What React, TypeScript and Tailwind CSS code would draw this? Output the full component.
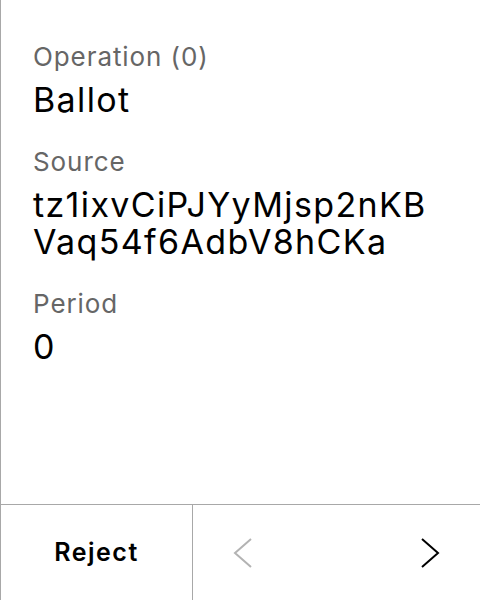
const fields = [
  { label: 'Operation (0)', value: 'Ballot' },
  { label: 'Source', value: 'tz1ixvCiPJYyMjsp2nKBVaq54f6AdbV8hCKa' },
  { label: 'Period', value: '0' },
];

const Chevron = ({ dir, color }: { dir: 'left' | 'right'; color: string }) => (
  <svg width="20" height="32" viewBox="0 0 20 32" fill="none" className={color}>
    <polyline
      points={dir === 'left' ? '18,2 2,16 18,30' : '2,2 18,16 2,30'}
      stroke="currentColor"
      strokeWidth="2"
    />
  </svg>
);

const App = () => {
  return (
    <div className="flex h-[600px] w-[480px] flex-col border-l border-[#a8a8a8] bg-white font-['Inter',sans-serif] text-black">
      <div className="flex flex-1 flex-col gap-[28px] pl-[32px] pr-[30px] pt-[41px]">
        {fields.map((f) => (
          <div key={f.label} className="flex flex-col gap-[8px]">
            <span className="text-[26px] leading-[32px] tracking-[0.035em] text-[#666666]">{f.label}</span>
            <span className="break-all text-[34px] leading-[37px] tracking-[0.04em]">{f.value}</span>
          </div>
        ))}
      </div>
      <div className="flex h-[96px] border-t border-[#a8a8a8]">
        <button className="flex w-[192px] items-center justify-center border-r border-[#a8a8a8] text-[25px] font-semibold tracking-[0.06em]">
          Reject
        </button>
        <div className="flex flex-1 items-center justify-between px-[40px]">
          <Chevron dir="left" color="text-[#b3b3b3]" />
          <Chevron dir="right" color="text-black" />
        </div>
      </div>
    </div>
  );
};

export default App;
